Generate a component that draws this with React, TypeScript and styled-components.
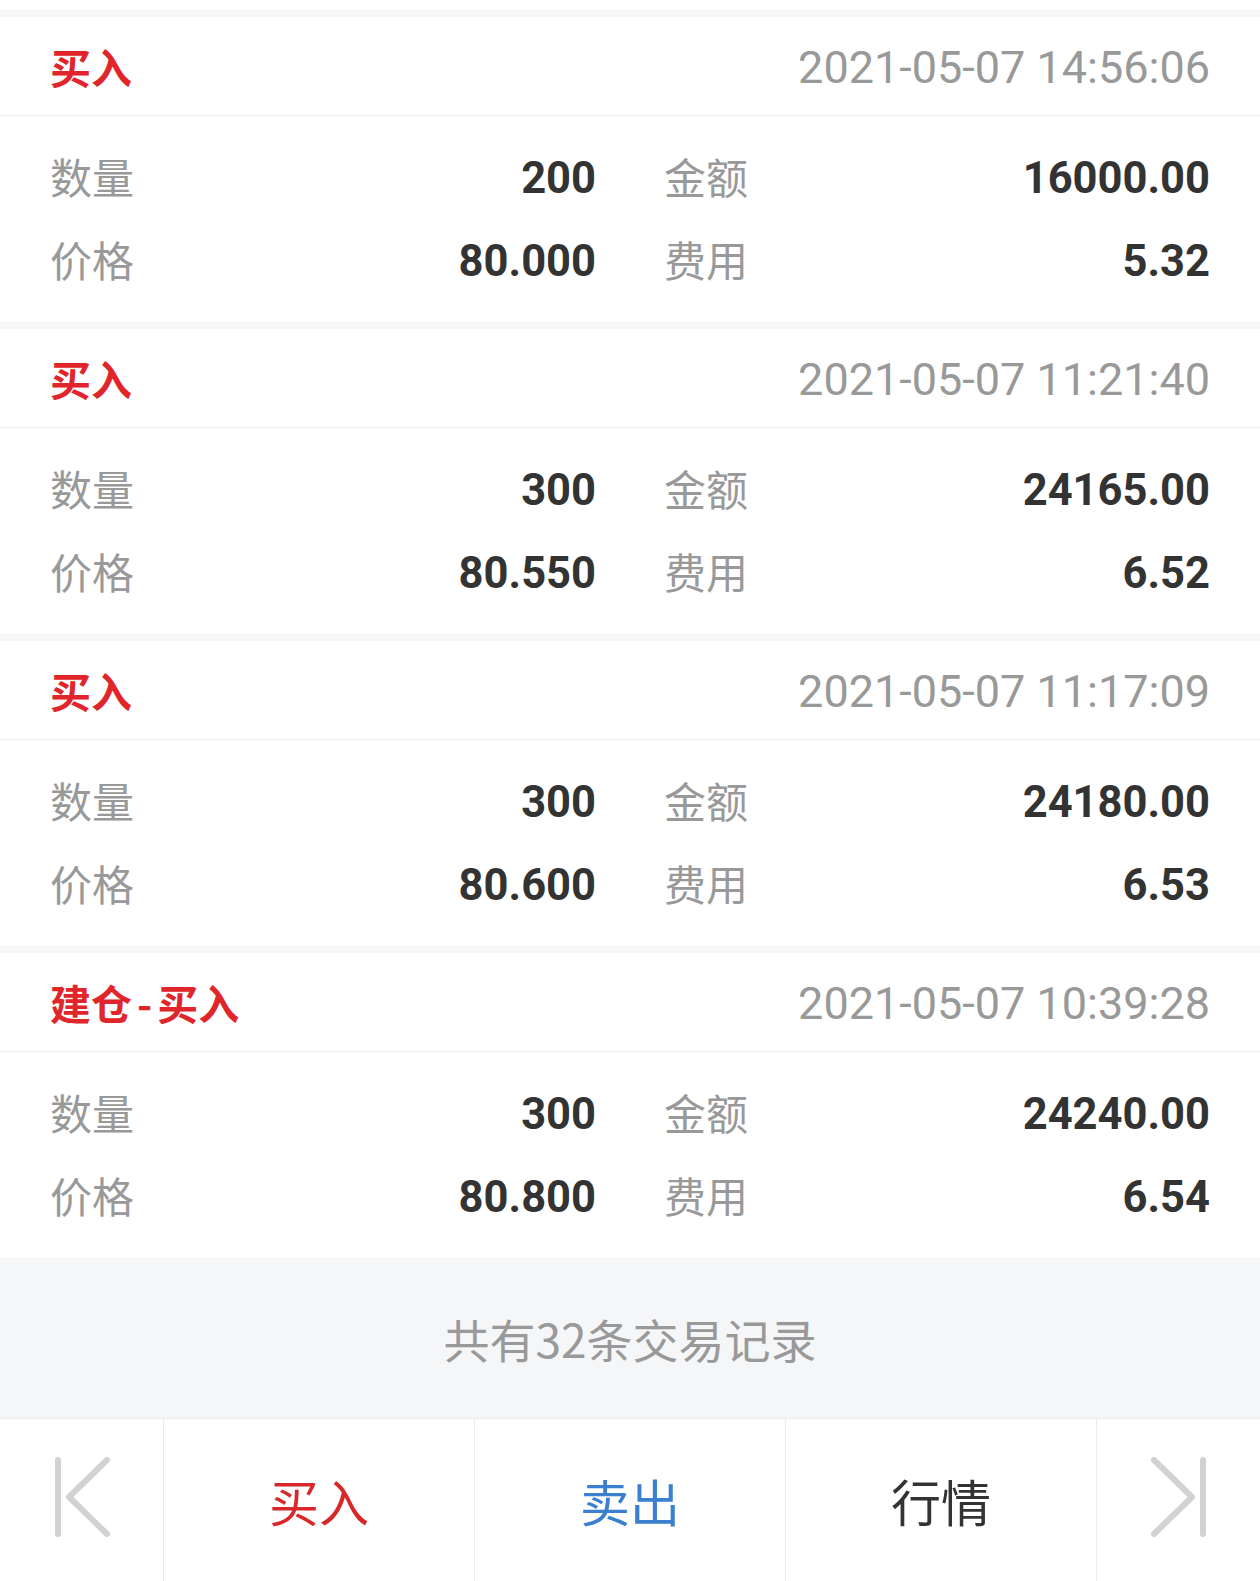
import React from "react";
import styled, { createGlobalStyle } from "styled-components";

const GlobalStyle = createGlobalStyle`
  html, body {
    margin: 0;
    padding: 0;
    background: #ffffff;
  }
  * { box-sizing: border-box; }
`;

const CJK = `"Noto Sans CJK SC", "Noto Sans", sans-serif`;
const NUM = `Roboto, "Noto Sans CJK SC", sans-serif`;

const Page = styled.div`
  width: 1260px;
  background: #f5f6f8;
  display: flex;
  flex-direction: column;
`;

const TopStub = styled.div`
  height: 10px;
  background: #ffffff;
  margin-bottom: 7px;
`;

const List = styled.div`
  display: flex;
  flex-direction: column;
  gap: 7px;
`;

const Card = styled.section`
  background: #ffffff;
`;

const CardHeader = styled.header`
  height: 99px;
  padding: 2px 50px 0;
  display: flex;
  align-items: center;
  justify-content: space-between;
  border-bottom: 1px solid #f1f1f1;
`;

const Title = styled.span`
  font-family: ${CJK};
  font-weight: 700;
  font-size: 41px;
  line-height: 1;
  color: #e0262b;
  margin-top: -2px;
`;

const Dash = styled.span`
  display: inline-block;
  margin: 0 5px;
`;

const Time = styled.span`
  font-family: ${NUM};
  font-size: 45px;
  line-height: 1;
  color: #999999;
`;

const CardBody = styled.div`
  padding: 20px 50px;
  display: grid;
  grid-template-columns: 1fr 1fr;
  grid-auto-rows: 83px;
  column-gap: 68px;
`;

const Pair = styled.div`
  display: flex;
  align-items: center;
  justify-content: space-between;
`;

const Label = styled.span`
  font-family: ${CJK};
  font-size: 42px;
  line-height: 1;
  color: #999999;
  margin-top: -3px;
`;

const Value = styled.span`
  font-family: ${NUM};
  font-weight: 700;
  font-size: 43.5px;
  line-height: 1;
  color: #333333;
  margin-top: 3px;
`;

const Summary = styled.div`
  height: 160px;
  display: flex;
  align-items: center;
  justify-content: center;
  font-family: ${CJK};
  font-size: 46px;
  color: #999999;
`;

const BottomBar = styled.nav`
  height: 163px;
  background: #ffffff;
  border-top: 1px solid #ececec;
  display: grid;
  grid-template-columns: 163px 311px 311px 311px 1fr;
`;

const IconCell = styled.div<{ $side: "left" | "right" }>`
  display: flex;
  align-items: flex-start;
  padding-top: 38px;
  padding-left: ${(p) => (p.$side === "left" ? "55px" : "54px")};
  border-left: ${(p) => (p.$side === "right" ? "1px solid #ececec" : "none")};
`;

const ActionCell = styled.button<{ $color: string }>`
  appearance: none;
  background: #ffffff;
  border: none;
  border-left: 1px solid #ececec;
  padding: 0;
  margin: 0;
  display: flex;
  align-items: center;
  justify-content: center;
  font-family: ${CJK};
  font-size: 50px;
  line-height: 1;
  color: ${(p) => p.$color};
`;

type Trade = {
  type: string;
  time: string;
  qty: string;
  amount: string;
  price: string;
  fee: string;
};

const trades: Trade[] = [
  { type: "买入", time: "2021-05-07 14:56:06", qty: "200", amount: "16000.00", price: "80.000", fee: "5.32" },
  { type: "买入", time: "2021-05-07 11:21:40", qty: "300", amount: "24165.00", price: "80.550", fee: "6.52" },
  { type: "买入", time: "2021-05-07 11:17:09", qty: "300", amount: "24180.00", price: "80.600", fee: "6.53" },
  { type: "建仓-买入", time: "2021-05-07 10:39:28", qty: "300", amount: "24240.00", price: "80.800", fee: "6.54" },
];

const FirstIcon = () => (
  <svg width="56" height="80" viewBox="0 0 56 80" fill="none" stroke="#d2d2d2" strokeWidth="6" strokeLinecap="round" strokeLinejoin="round">
    <line x1="3" y1="3" x2="3" y2="77" />
    <polyline points="52,3 14,40 52,77" />
  </svg>
);

const LastIcon = () => (
  <svg width="56" height="80" viewBox="0 0 56 80" fill="none" stroke="#d2d2d2" strokeWidth="6" strokeLinecap="round" strokeLinejoin="round">
    <polyline points="3,3 41,40 3,77" />
    <line x1="52" y1="3" x2="52" y2="77" />
  </svg>
);

const renderTitle = (type: string) => {
  const parts = type.split("-");
  return parts.map((p, i) => (
    <React.Fragment key={i}>
      {i > 0 && <Dash>-</Dash>}
      {p}
    </React.Fragment>
  ));
};

export default function App() {
  return (
    <>
      <GlobalStyle />
      <Page>
        <TopStub />
        <List>
          {trades.map((t, i) => (
            <Card key={i}>
              <CardHeader>
                <Title>{renderTitle(t.type)}</Title>
                <Time>{t.time}</Time>
              </CardHeader>
              <CardBody>
                <Pair>
                  <Label>数量</Label>
                  <Value>{t.qty}</Value>
                </Pair>
                <Pair>
                  <Label>金额</Label>
                  <Value>{t.amount}</Value>
                </Pair>
                <Pair>
                  <Label>价格</Label>
                  <Value>{t.price}</Value>
                </Pair>
                <Pair>
                  <Label>费用</Label>
                  <Value>{t.fee}</Value>
                </Pair>
              </CardBody>
            </Card>
          ))}
        </List>
        <Summary>共有32条交易记录</Summary>
        <BottomBar>
          <IconCell $side="left">
            <FirstIcon />
          </IconCell>
          <ActionCell $color="#d9282c">买入</ActionCell>
          <ActionCell $color="#3a7fd0">卖出</ActionCell>
          <ActionCell $color="#333333">行情</ActionCell>
          <IconCell $side="right">
            <LastIcon />
          </IconCell>
        </BottomBar>
      </Page>
    </>
  );
}
